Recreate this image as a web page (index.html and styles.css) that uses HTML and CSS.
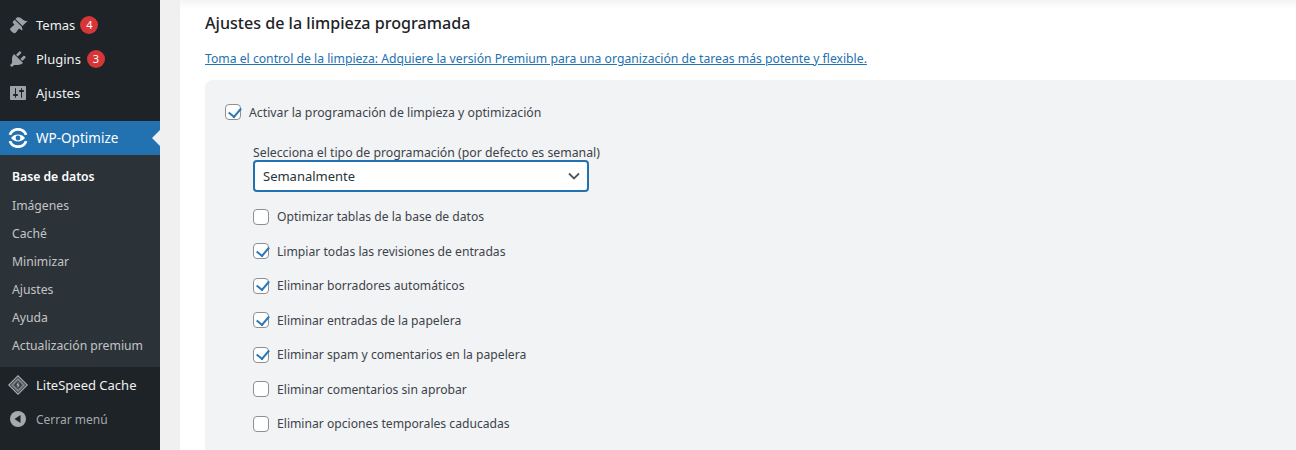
FILE: index.html
```html
<!DOCTYPE html>
<html lang="es">
<head>
    <meta charset="UTF-8">
    <title>WP-Optimize</title>
    <link rel="stylesheet" href="styles.css">
</head>
<body>
    <div class="layout">
        <div class="sidebar">
            <div class="menu-item">
                <svg class="menu-icon" viewBox="0 0 20 20"><path d="M14.480 11.060L7.410 3.990l1.500-1.500c.5-.56 2.300-.47 3.510.32 1.210.8 1.430 1.280 2.910 2.100 1.180.64 2.450 1.260 4.450.85zm-.71.71L6.700 4.700 4.930 6.470c-.39.39-.39 1.020 0 1.410l1.060 1.060c.39.39.39 1.030 0 1.420-.6.6-1.430 1.110-2.210 1.690-.35.26-.7.53-1.010.84C1.430 13.230 2 15 3.840 16.840s2.930 1.730 4.290.39c.31-.31.58-.66.84-1.010.58-.78 1.090-1.610 1.690-2.210.39-.39 1.030-.39 1.420 0l1.060 1.060c.39.39 1.020.39 1.410 0z" fill="#9ca2a7"/></svg>
                <span>Temas</span><span class="badge">4</span>
            </div>
            <div class="menu-item">
                <svg class="menu-icon" viewBox="0 0 20 20"><path d="M13.110 4.360L9.870 7.600 8 5.730l3.240-3.240c.35-.34 1.050-.2 1.560.32.52.51.66 1.210.31 1.550zm-8 1.770l.91-1.120 9.010 9.010-1.190.84c-.71.71-2.630 1.160-3.820 1.160H6.140L4.900 17.260c-.59.59-1.540.59-2.120 0-.59-.58-.59-1.530 0-2.120l1.240-1.240v-3.880c0-1.130.4-3.190 1.090-3.890zm7.260 3.970l3.240-3.240c.34-.35 1.040-.21 1.550.31.52.51.66 1.210.31 1.550l-3.240 3.250z" fill="#9ca2a7"/></svg>
                <span>Plugins</span><span class="badge plugins-badge">3</span>
            </div>
            <div class="menu-item">
                <svg class="menu-icon" viewBox="0 0 20 20"><path d="M18 16V4c0-.55-.45-1-1-1H3c-.55 0-1 .45-1 1v12c0 .55.45 1 1 1h14c.55 0 1-.45 1-1zM8 11h1c.55 0 1 .45 1 1s-.45 1-1 1H8v1.500c0 .28-.22.5-.5.5s-.5-.22-.5-.5V13H6c-.55 0-1-.45-1-1s.45-1 1-1h1V5.500c0-.28.22-.5.5-.5s.5.22.5.5V11zm5-2h-1c-.55 0-1-.45-1-1s.45-1 1-1h1V5.500c0-.28.22-.5.5-.5s.5.22.5.5V7h1c.55 0 1 .45 1 1s-.45 1-1 1h-1v5.500c0 .28-.22.5-.5.5s-.5-.22-.5-.5V9z" fill="#9ca2a7" fill-rule="evenodd"/></svg>
                <span>Ajustes</span>
            </div>

            <div class="menu-item current">
                <svg class="menu-icon" viewBox="0 0 20 20">
                    <path d="M.6 6.500A10 10 0 0 1 19.400 6.500L16.800 7.300A7.300 7.300 0 0 0 3.200 7.300zM.6 13.500a10 10 0 0 0 18.800 0L16.800 12.700a7.300 7.300 0 0 1-13.600 0z" fill="#fff"/>
                    <path d="M3 10c1.800-2.300 4.200-3.400 7-3.400s5.200 1.100 7 3.400c-1.800 2.300-4.200 3.400-7 3.400S4.800 12.300 3 10z" fill="#fff"/>
                    <circle cx="10" cy="10" r="2.400" fill="#2271b1"/>
                </svg>
                <span>WP-Optimize</span>
            </div>
            <div class="submenu">
                <div class="sub-item active">Base de datos</div>
                <div class="sub-item">Imágenes</div>
                <div class="sub-item">Caché</div>
                <div class="sub-item">Minimizar</div>
                <div class="sub-item">Ajustes</div>
                <div class="sub-item">Ayuda</div>
                <div class="sub-item">Actualización premium</div>
            </div>
            <div class="menu-item">
                <svg class="menu-icon" viewBox="0 0 20 20">
                    <path d="M10 0L20 10 10 20 0 10z" fill="#a7aaad"/>
                    <path d="M10 1.800L18.200 10 10 18.200 1.800 10z" fill="#2c3338"/>
                    <path d="M10 2.800L17.200 10 10 17.200 2.800 10z" fill="#7d8388"/>
                    <path d="M10 5.500L14.500 10 10 14.500 5.500 10z" fill="#3c434a"/>
                    <path d="M10.600 6.800L8.400 10.300h1.400l-.4 2.900 2.200-3.500h-1.400z" fill="#c3c4c7"/>
                </svg>
                <span>LiteSpeed Cache</span>
            </div>
            <div class="menu-item collapse">
                <svg class="menu-icon" viewBox="0 0 20 20"><circle cx="10" cy="10" r="8" fill="#a7aaad"/><path d="M12.500 6v8l-6-4z" fill="#1d2327"/></svg>
                <span>Cerrar menú</span>
            </div>
        </div>

        <div class="content">
            <div class="card">
                <h3 class="title">Ajustes de la limpieza programada</h3>
                <a class="premium-link" href="#">Toma el control de la limpieza: Adquiere la versión Premium para una organización de tareas más potente y flexible.</a>

                <div class="panel">
                    <label class="check-row main-check">
                        <span class="box checked"></span>
                        Activar la programación de limpieza y optimización
                    </label>

                    <div class="options">
                        <div class="select-label">Selecciona el tipo de programación (por defecto es semanal)</div>
                        <div class="select-box">
                            <span>Semanalmente</span>
                            <svg class="chevron" viewBox="0 0 12 8"><path d="M1 1.500l5 5 5-5" fill="none" stroke="#50575e" stroke-width="1.800"/></svg>
                        </div>

                        <div class="check-list">
                            <label class="check-row"><span class="box"></span>Optimizar tablas de la base de datos</label>
                            <label class="check-row"><span class="box checked"></span>Limpiar todas las revisiones de entradas</label>
                            <label class="check-row"><span class="box checked"></span>Eliminar borradores automáticos</label>
                            <label class="check-row"><span class="box checked"></span>Eliminar entradas de la papelera</label>
                            <label class="check-row"><span class="box checked"></span>Eliminar spam y comentarios en la papelera</label>
                            <label class="check-row"><span class="box"></span>Eliminar comentarios sin aprobar</label>
                            <label class="check-row"><span class="box"></span>Eliminar opciones temporales caducadas</label>
                        </div>
                    </div>
                </div>
            </div>
        </div>
    </div>
</body>
</html>
```

FILE: styles.css
```css
* {
    box-sizing: border-box;
}

html, body {
    margin: 0;
    height: 450px;
    overflow: hidden;
}

body {
    font-family: "Noto Sans", "Open Sans", sans-serif;
    font-size: 12.2px;
    color: #3c434a;
    background: #f0f0f1;
}

.layout {
    display: flex;
    height: 450px;
    overflow: hidden;
}

.sidebar {
    width: 160px;
    flex: none;
    background: #1d2327;
    padding-top: 8px;
}

.menu-item {
    position: relative;
    display: flex;
    align-items: center;
    height: 34px;
    padding-left: 8px;
    color: #f0f0f1;
    font-size: 13px;
}

.menu-icon {
    width: 20px;
    height: 20px;
    margin-right: 8px;
    flex: none;
}

.badge {
    width: 18px;
    height: 18px;
    margin-left: 5px;
    border-radius: 50%;
    background: #d63638;
    color: #fff;
    font-size: 11px;
    line-height: 18px;
    text-align: center;
}

.plugins-badge {
    margin-left: 6px;
}

.current {
    margin-top: 11px;
    background: #2271b1;
    color: #fff;
    font-size: 13.5px;
}

.current::after {
    content: "";
    position: absolute;
    right: 0;
    top: 9px;
    border: 8px solid transparent;
    border-right-color: #f0f0f1;
    border-left-width: 0;
}

.submenu {
    background: #2c3338;
    padding: 7px 0;
    margin-bottom: 1px;
}

.sub-item {
    height: 28px;
    line-height: 28px;
    padding-left: 12px;
    color: #c3c4c7;
    font-size: 12.2px;
}

.sub-item.active {
    height: 30px;
    line-height: 30px;
    color: #fff;
    font-weight: 600;
}

.collapse {
    color: #a7aaad;
    font-size: 12px;
}

.content {
    flex: 1;
    min-width: 0;
    padding-left: 20px;
}

.card {
    height: 100%;
    padding: 0 0 0 25px;
    background: #fff;
    box-shadow: inset 0 10px 10px -8px rgba(0, 0, 0, 0.07);
}

.title {
    margin: 0;
    padding-top: 12px;
    font-size: 16.1px;
    line-height: 22px;
    font-weight: 500;
    color: #1d2327;
}

.premium-link {
    display: block;
    margin-top: 16px;
    line-height: 18px;
    color: #2271b1;
    font-size: 12.2px;
    text-decoration: underline;
}

.panel {
    margin-top: 12px;
    height: 370px;
    padding: 23px 0 0 20px;
    background: #f2f3f5;
    border-radius: 8px 0 0 0;
}

.check-row {
    display: flex;
    align-items: center;
    gap: 8px;
    height: 18px;
    font-size: 12.25px;
    color: #3c434a;
}

.box {
    position: relative;
    width: 16px;
    height: 16px;
    flex: none;
    background: #fff;
    border: 1px solid #8c8f94;
    border-radius: 4px;
}

.box.checked::after {
    content: "";
    position: absolute;
    left: 4.5px;
    top: -0.5px;
    width: 5.5px;
    height: 10px;
    border: solid #2b78b8;
    border-width: 0 2.5px 2.5px 0;
    transform: rotate(40deg);
}

.options {
    padding: 24px 0 0 28px;
}

.select-label {
    line-height: 15px;
    font-size: 12.27px;
    color: #3c434a;
}

.select-box {
    display: flex;
    align-items: center;
    justify-content: space-between;
    width: 336px;
    height: 32px;
    padding: 0 7px 0 8px;
    background: #fff;
    border: 2px solid #2271b1;
    border-radius: 4px;
    color: #2c3338;
    font-size: 13px;
}

.chevron {
    width: 12px;
    height: 8px;
}

.check-list {
    display: flex;
    flex-direction: column;
    gap: 16.5px;
    padding-top: 15.5px;
}

.check-list .check-row {
    font-size: 12.15px;
}
```
